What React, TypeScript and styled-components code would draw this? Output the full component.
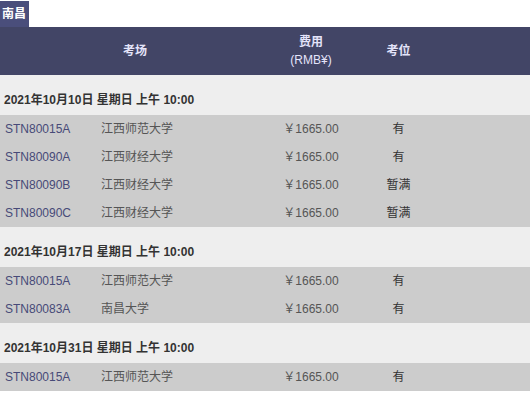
import React from "react";
import styled, { createGlobalStyle } from "styled-components";

const Global = createGlobalStyle`
  html, body { margin: 0; padding: 0; background: #fff; }
  body { font-family: "Liberation Sans", Arial, "Noto Sans CJK SC", sans-serif; font-size: 12px; }
`;

const Wrap = styled.div`
  width: 530px;
  padding-top: 1px;
`;

const Tab = styled.div`
  display: inline-block;
  background: #4a4e7b;
  color: #fff;
  font-weight: bold;
  font-size: 12px;
  line-height: 26px;
  height: 26px;
  padding: 0 2px 0 2px;
  width: 25px;
  vertical-align: top;
`;

const Table = styled.table`
  width: 530px;
  border-collapse: collapse;
  table-layout: fixed;
`;

const HeadRow = styled.tr`
  background: #424566;
  height: 48px;
`;

const Th = styled.th`
  color: #e4e4fa;
  font-weight: bold;
  font-size: 12px;
  line-height: 18px;
  text-align: center;
  padding: 0;
`;

const Unit = styled.span`
  font-weight: normal;
`;

const DateRow = styled.tr`
  background: #eeeeee;
  height: 40px;
`;

const DateCell = styled.td`
  font-weight: bold;
  color: #333;
  font-size: 12px;
  line-height: 18px;
  padding: 16px 4px 6px;
  vertical-align: top;
`;

const DataRow = styled.tr`
  background: #cccccc;
  height: 28px;
`;

const Td = styled.td<{ $tone: "code" | "name" | "price" | "status"; $align?: "left" | "center" }>`
  font-size: 12px;
  line-height: 18px;
  padding: 0 5px;
  text-align: ${(p) => p.$align ?? "left"};
  color: ${(p) =>
    p.$tone === "code" ? "#474a78" : p.$tone === "status" ? "#333" : "#555"};
  white-space: nowrap;
`;

type Row = { code: string; name: string; status: string };
const groups: { date: string; rows: Row[] }[] = [
  {
    date: "2021年10月10日 星期日 上午 10:00",
    rows: [
      { code: "STN80015A", name: "江西师范大学", status: "有" },
      { code: "STN80090A", name: "江西财经大学", status: "有" },
      { code: "STN80090B", name: "江西财经大学", status: "暂满" },
      { code: "STN80090C", name: "江西财经大学", status: "暂满" },
    ],
  },
  {
    date: "2021年10月17日 星期日 上午 10:00",
    rows: [
      { code: "STN80015A", name: "江西师范大学", status: "有" },
      { code: "STN80083A", name: "南昌大学", status: "有" },
    ],
  },
  {
    date: "2021年10月31日 星期日 上午 10:00",
    rows: [{ code: "STN80015A", name: "江西师范大学", status: "有" }],
  },
];

export default function App() {
  return (
    <Wrap>
      <Global />
      <Tab>南昌</Tab>
      <Table>
        <colgroup>
          <col style={{ width: 96 }} />
          <col style={{ width: 174 }} />
          <col style={{ width: 82 }} />
          <col style={{ width: 93 }} />
          <col />
        </colgroup>
        <thead>
          <HeadRow>
            <Th colSpan={2}>考场</Th>
            <Th>
              费用
              <br />
              <Unit>(RMB¥)</Unit>
            </Th>
            <Th>考位</Th>
            <Th />
          </HeadRow>
        </thead>
        {groups.map((g) => (
          <tbody key={g.date}>
            <DateRow>
              <DateCell colSpan={5}>{g.date}</DateCell>
            </DateRow>
            {g.rows.map((r, i) => (
              <DataRow key={i}>
                <Td $tone="code">{r.code}</Td>
                <Td $tone="name">{r.name}</Td>
                <Td $tone="price" $align="center">￥1665.00</Td>
                <Td $tone="status" $align="center">{r.status}</Td>
                <Td $tone="name" />
              </DataRow>
            ))}
          </tbody>
        ))}
      </Table>
    </Wrap>
  );
}
